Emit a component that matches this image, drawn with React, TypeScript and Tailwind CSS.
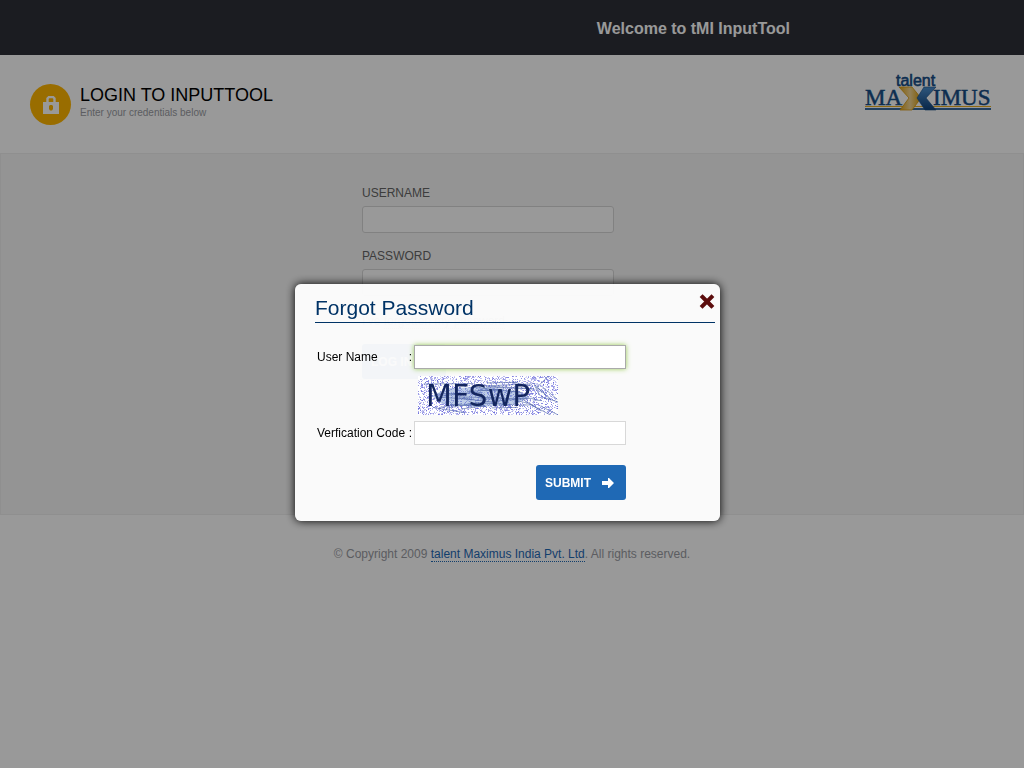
import { ReactNode } from 'react';

function LockBadge() {
  return (
    <div className="flex h-[41px] w-[41px] shrink-0 items-center justify-center rounded-full bg-[#ffb600]">
      <svg width="16" height="18" viewBox="0 0 16 18" fill="none">
        <path d="M4.5 8V2.5L6 1H10L11.5 2.5V8" stroke="#fff" strokeWidth="2.4" />
        <path fillRule="evenodd" d="M0 6H16V18H0ZM7 9L6 10V13L7 14.5H9L10 13V10L9 9Z" fill="#fff" />
      </svg>
    </div>
  );
}

function Logo() {
  return (
    <svg width="128" height="42" viewBox="0 0 128 42" role="img" aria-label="talent Maximus">
      <defs>
        <linearGradient id="gold" x1="0" x2="1">
          <stop offset="0" stopColor="#e0a010" />
          <stop offset="0.5" stopColor="#f2d694" />
          <stop offset="1" stopColor="#d99800" />
        </linearGradient>
        <linearGradient id="blue" x1="0" x2="0" y1="0" y2="1">
          <stop offset="0" stopColor="#4d8fce" />
          <stop offset="1" stopColor="#0f427a" />
        </linearGradient>
      </defs>
      <rect x="1" y="33" width="126" height="1" fill="#eab020" />
      <rect x="1" y="35" width="126" height="2" fill="#3a6c9e" />
      <g fill="#164d86">
        <text x="32" y="13" className="font-['Liberation_Sans',Arial,sans-serif] text-[16px]" stroke="#164d86" strokeWidth="0.6">talent</text>
        <text x="1" y="32" className="font-['Liberation_Serif',serif] text-[23px]" stroke="#164d86" strokeWidth="0.5">MA</text>
        <text x="69" y="32" className="font-['Liberation_Serif',serif] text-[23px]" stroke="#164d86" strokeWidth="0.5">IMUS</text>
      </g>
      <path d="M35 14H48L57 25L48 37H36L45 25Z" fill="url(#gold)" stroke="#d99a0c" strokeWidth="0.8" />
      <path d="M60 14H72L62 25L72 37H61L53 25Z" fill="url(#blue)" stroke="#164d86" strokeWidth="0.6" />
    </svg>
  );
}

// small seeded generator so the captcha noise is the same on every render
function makeRandom(seed: number) {
  let s = seed;
  return () => {
    s = (s * 16807) % 2147483647;
    return s / 2147483647;
  };
}

const rand = makeRandom(4711);
const specks = Array.from({ length: 2600 }, () => ({
  x: Math.floor(rand() * 140),
  y: Math.floor(rand() * 39),
  o: 0.2 + rand() * 0.55,
}));
const scratches = Array.from({ length: 40 }, (_, i) => {
  const x = i < 22 ? rand() * 80 : 80 + rand() * 45;
  const y = 6 + rand() * 28;
  return {
    x1: x,
    y1: y,
    x2: x + (i < 22 ? 20 + rand() * 30 : 5 + rand() * 20),
    y2: y + (rand() - 0.5) * (i < 22 ? 12 : 34),
  };
});

function Captcha() {
  return (
    <svg width="140" height="39" viewBox="0 0 140 39" role="img" aria-label="Captcha">
      <rect width="140" height="39" fill="#fff" />
      {specks.map((p, i) => (
        <rect key={i} x={p.x} y={p.y} width="1" height="1" fill="#6060d8" opacity={p.o} />
      ))}
      <path d="M14 20L30 12L70 11L100 15L112 21L96 29L60 31L24 28Z" fill="#7d9bd0" opacity="0.5" />
      {scratches.map((l, i) => (
        <line key={i} {...l} stroke="#4a62a5" strokeWidth="1" opacity="0.6" />
      ))}
      <text x="8" y="30" fill="#14265f" className="font-['DejaVu_Sans',sans-serif] text-[30px]">MFSwP</text>
    </svg>
  );
}

function Field({ id, label, type, children }: { id: string; label: string; type: string; children?: ReactNode }) {
  return (
    <div>
      <label htmlFor={id} className="block h-[21px] text-[12px] leading-4 text-[#666]">{label}</label>
      <input id={id} type={type} className="block h-[27px] w-[252px] rounded-[3px] border border-[#d8d8d8] bg-white px-2 text-[12px]" />
      {children}
    </div>
  );
}

function ForgotPassword() {
  return (
    <div className="fixed inset-0 flex items-start justify-center bg-black/40 pt-[284px] pr-[9px]">
      <div role="dialog" aria-label="Forgot Password" className="h-[237px] w-[425px] rounded-[6px] bg-white/95 pt-[10px] pr-[5px] pl-5 text-black shadow-[0_0_10px_#000]">
        <div className="flex h-[29px] items-start justify-between border-b border-[#003366]">
          <h2 className="text-[21px] leading-7 text-[#003366]">Forgot Password</h2>
          <button aria-label="Close" className="h-4 w-4">
            <svg width="16" height="16" viewBox="0 0 16 16">
              <path d="M3.5 3L12.5 12M12.5 3L3.5 12" stroke="#5c0d0d" strokeWidth="4" strokeLinecap="square" />
            </svg>
          </button>
        </div>
        <form className="mt-[22px] w-[311px] text-[12px]" onSubmit={(e) => e.preventDefault()}>
          <div className="flex h-6 items-center">
            <label htmlFor="fp-user" className="flex w-[99px] shrink-0 justify-between pr-[2px] pl-[2px]">
              <span>User Name</span>
              <span>:</span>
            </label>
            <input id="fp-user" type="text" className="h-6 w-[212px] border border-[#aaa] bg-white px-1 shadow-[0_0_5px_#9c5] outline-none" />
          </div>
          <div className="mt-[7px] ml-[103px] h-[39px]">
            <Captcha />
          </div>
          <div className="mt-[6px] flex h-6 items-center">
            <label htmlFor="fp-code" className="flex w-[99px] shrink-0 justify-between pr-[2px] pl-[2px]">
              <span>Verfication Code</span>
              <span>:</span>
            </label>
            <input id="fp-code" type="text" className="h-6 w-[212px] border border-[#d8d8d8] bg-white px-1" />
          </div>
          <button type="submit" className="mt-5 ml-auto flex h-[35px] w-[90px] items-center justify-between rounded-[3px] bg-[#1f69b5] pr-3 pl-[9px] font-bold text-white">
            SUBMIT
            <svg width="12" height="12" viewBox="0 0 12 12">
              <path d="M0 4H6V1H7L12 6L7 11H6V8H0Z" fill="#fff" />
            </svg>
          </button>
        </form>
      </div>
    </div>
  );
}

export default function App() {
  return (
    <div className="min-h-screen bg-white font-['Liberation_Sans',Arial,sans-serif]">
      <header className="flex h-[55px] items-center justify-end bg-[#2e2f38] pt-[2px] pr-[234px]">
        <h3 className="text-[16px] leading-6 font-bold text-white">Welcome to tMI InputTool</h3>
      </header>
      <div className="flex h-[98px] items-start justify-between pr-8 pl-[30px]">
        <div className="flex gap-[9px] pt-[29px]">
          <LockBadge />
          <div>
            <h1 className="text-[18px] leading-[22px] text-black">LOGIN TO INPUTTOOL</h1>
            <p className="text-[10px] leading-[14px] text-[#999ba2]">Enter your credentials below</p>
          </div>
        </div>
        <div className="pt-[18px]">
          <Logo />
        </div>
      </div>
      <main className="h-[362px] border border-[#eee] bg-[#f7f7f7] pt-[31px]">
        <form className="mx-auto flex w-[300px] flex-col gap-[15px]" onSubmit={(e) => e.preventDefault()}>
          <Field id="username" label="USERNAME" type="text" />
          <Field id="password" label="PASSWORD" type="password">
            <p className="mt-[17px] text-[12px] leading-4 text-[#999]">
              I've <a href="#forgot" className="border-b border-dotted border-[#999]">forgotten my password</a>
            </p>
          </Field>
          <button type="submit" className="h-[35px] w-[84px] rounded-[3px] bg-[#1f69b5] pl-[9px] text-left text-[12px] font-bold text-white">
            LOG IN
          </button>
        </form>
      </main>
      <footer className="pt-[31px] text-center text-[12px] leading-4 text-[#999ba2]">
        © Copyright 2009 <a href="#company" className="border-b border-dotted border-[#1f69b5] text-[#1f69b5]">talent Maximus India Pvt. Ltd</a>. All rights reserved.
      </footer>
      <ForgotPassword />
    </div>
  );
}
